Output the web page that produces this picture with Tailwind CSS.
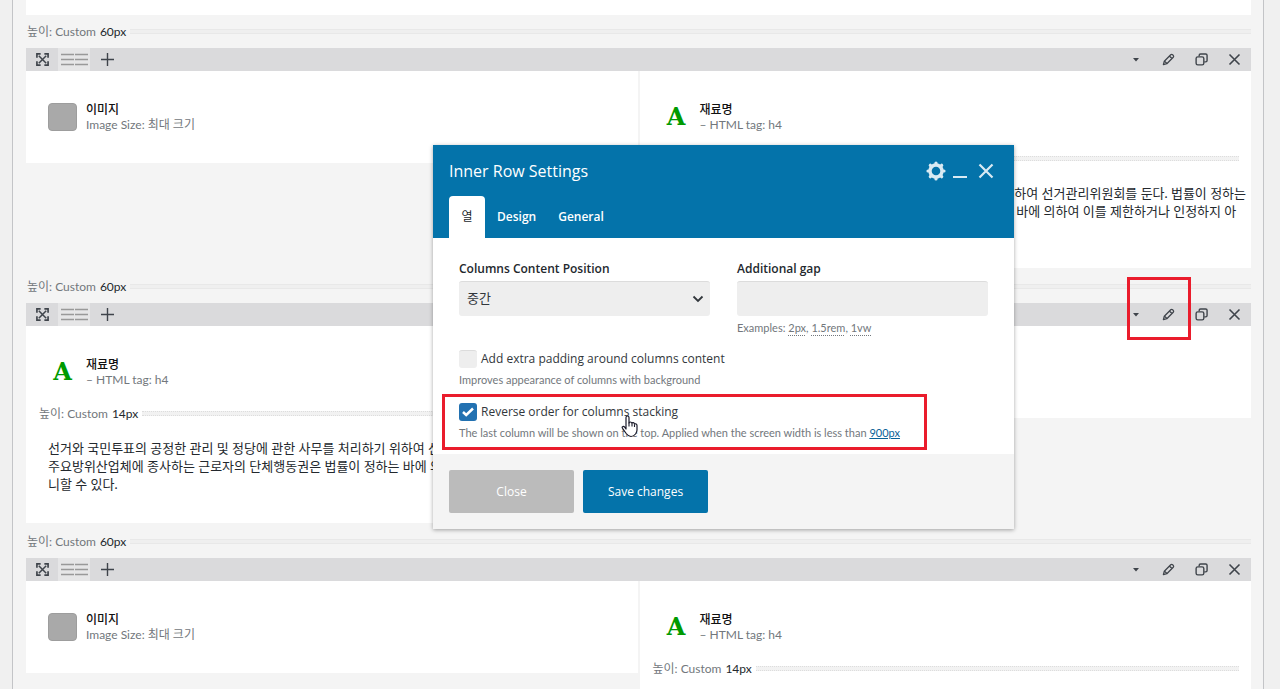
<!DOCTYPE html>
<html lang="ko">
<head>
<meta charset="utf-8">
<title>Inner Row Settings</title>
<script src="https://cdn.jsdelivr.net/npm/@tailwindcss/browser@4"></script>
</head>
<body class="h-screen overflow-hidden bg-[#f0f0f0] pl-3 pr-4 font-['Open_Sans','Noto_Sans_CJK_KR',sans-serif] text-xs text-[#72777c]">

<svg class="hidden" aria-hidden="true">
  <symbol id="i-move" viewBox="0 0 14 14"><path d="M3 3l8 8M11 3l-8 8" fill="none" stroke="currentColor" stroke-width="1.6"/><path d="M1 5V1h4M9 1h4v4M13 9v4H9M5 13H1V9" fill="none" stroke="currentColor" stroke-width="1.8"/></symbol>
  <symbol id="i-cols" viewBox="0 0 28 13"><path d="M1 1.500h13M15 1.500h13M1 6.500h13M15 6.500h13M1 11.500h13M15 11.500h13" fill="none" stroke="#999" stroke-width="1.300"/></symbol>
  <symbol id="i-plus" viewBox="0 0 13 13"><path d="M6.500 0v13M0 6.500h13" fill="none" stroke="currentColor" stroke-width="1.4"/></symbol>
  <symbol id="i-caret" viewBox="0 0 8 4"><path d="M1 0h6L4 3.5z" fill="currentColor"/></symbol>
  <symbol id="i-pencil" viewBox="0 0 14 14"><path d="M1.5 12.5l1-3.7 6.900-6.900q1-.9 2 0l.7.7q.9 1 0 2L5.200 11.500zM8 3.300L10.700 6M3 9l2 2" fill="none" stroke="currentColor" stroke-width="1.400" stroke-linejoin="round"/></symbol>
  <symbol id="i-copy" viewBox="0 0 14 14"><path d="M4.500 3.500V2.500q0-1.500 1.500-1.500h5.500q1.500 0 1.500 1.500V8q0 1.500-1.500 1.500h-1.500" fill="none" stroke="currentColor" stroke-width="1.500"/><rect x="1.200" y="4.200" width="8.300" height="8.600" rx="1.800" fill="none" stroke="currentColor" stroke-width="1.500"/></symbol>
  <symbol id="i-close" viewBox="0 0 13 13"><path d="M1.500 1.500l10 10M11.500 1.500l-10 10" fill="none" stroke="currentColor" stroke-width="1.600"/></symbol>
</svg>

<main class="h-full border-x border-[#c3c4c7] bg-[#f4f4f4] pl-[13px] pr-3 font-['Lato','Noto_Sans_CJK_KR',sans-serif]">
  <div class="h-[15px] bg-white"></div>
  <div class="flex flex-col gap-0.5">

    <section>
      <div class="flex h-[33px] items-center pl-px"><span>높이: Custom</span><b class="ml-1 font-normal text-[#23282d]">60px</b><i class="ml-1 h-[5px] grow border-y border-[#e8e8e8] bg-[#efefef]"></i></div>
      <div class="flex h-[23px] bg-[#dadadc] text-[#3f444b]">
        <button aria-label="Move" class="flex w-8 items-center justify-center"><svg class="size-[13px]"><use href="#i-move"/></svg></button>
        <button aria-label="Columns" class="flex w-8 items-center justify-center bg-[#e6e6e7]"><svg class="h-[13px] w-7"><use href="#i-cols"/></svg></button>
        <button aria-label="Add" class="flex w-[35px] items-center justify-center"><svg class="size-[13px]"><use href="#i-plus"/></svg></button>
        <div class="ml-auto flex">
          <button aria-label="More" class="flex w-[33px] items-center justify-center"><svg class="h-1 w-2"><use href="#i-caret"/></svg></button>
          <button aria-label="Edit" class="flex w-[33px] items-center justify-center"><svg class="size-[13px]"><use href="#i-pencil"/></svg></button>
          <button aria-label="Duplicate" class="flex w-[33px] items-center justify-center"><svg class="size-[13px]"><use href="#i-copy"/></svg></button>
          <button aria-label="Delete" class="flex w-[33px] items-center justify-center"><svg class="size-[13px]"><use href="#i-close"/></svg></button>
        </div>
      </div>
      <div class="grid grid-cols-2 items-start gap-0.5">
        <div class="bg-white py-[31px]">
          <div class="flex items-center pl-[22px]"><span class="h-7 w-[29px] rounded border border-[#9d9d9d] bg-[#a9a9a9]"></span><p class="ml-[9px] leading-[15px]"><b class="font-medium text-[#111]">이미지</b><br>Image Size: 최대 크기</p></div>
        </div>
        <div class="bg-white pt-[31px] pb-[30px]">
          <div class="flex items-center pl-[22px]"><span class="w-[29px] text-center font-['DejaVu_Serif'] text-2xl leading-7 font-bold text-[#009a00]">A</span><p class="ml-[9px] leading-[15px]"><b class="font-medium text-[#111]">재료명</b><br>– HTML tag: h4</p></div>
          <div class="mt-2.5 flex h-[33px] items-center pl-[13px] pr-3"><span>높이: Custom</span><b class="ml-1 font-normal text-[#23282d]">14px</b><i class="ml-1 h-[5px] grow border-y border-dotted border-[#dddddd] bg-[#f2f2f2]"></i></div>
          <p class="mt-[9px] pl-[22px] text-[13px] leading-[18px] whitespace-nowrap text-[#23282d]">선거와 국민투표의 공정한 관리 및 정당에 관한 사무를 처리하기 위하여 선거관리위원회를 둔다. 법률이 정하는<br>주요방위산업체에 종사하는 근로자의 단체행동권은 법률이 정하는 바에 의하여 이를 제한하거나 인정하지 아<br>니할 수 있다.</p>
        </div>
      </div>
    </section>

    <section>
      <div class="flex h-[33px] items-center pl-px"><span>높이: Custom</span><b class="ml-1 font-normal text-[#23282d]">60px</b><i class="ml-1 h-[5px] grow border-y border-[#e8e8e8] bg-[#efefef]"></i></div>
      <div class="flex h-[23px] bg-[#dadadc] text-[#3f444b]">
        <button aria-label="Move" class="flex w-8 items-center justify-center"><svg class="size-[13px]"><use href="#i-move"/></svg></button>
        <button aria-label="Columns" class="flex w-8 items-center justify-center bg-[#e6e6e7]"><svg class="h-[13px] w-7"><use href="#i-cols"/></svg></button>
        <button aria-label="Add" class="flex w-[35px] items-center justify-center"><svg class="size-[13px]"><use href="#i-plus"/></svg></button>
        <div class="ml-auto flex">
          <button aria-label="More" class="flex w-[33px] items-center justify-center"><svg class="h-1 w-2"><use href="#i-caret"/></svg></button>
          <button aria-label="Edit" class="flex w-[33px] items-center justify-center"><svg class="size-[13px]"><use href="#i-pencil"/></svg></button>
          <button aria-label="Duplicate" class="flex w-[33px] items-center justify-center"><svg class="size-[13px]"><use href="#i-copy"/></svg></button>
          <button aria-label="Delete" class="flex w-[33px] items-center justify-center"><svg class="size-[13px]"><use href="#i-close"/></svg></button>
        </div>
      </div>
      <div class="grid grid-cols-2 items-start gap-0.5">
        <div class="bg-white pt-[31px] pb-[30px]">
          <div class="flex items-center pl-[22px]"><span class="w-[29px] text-center font-['DejaVu_Serif'] text-2xl leading-7 font-bold text-[#009a00]">A</span><p class="ml-[9px] leading-[15px]"><b class="font-medium text-[#111]">재료명</b><br>– HTML tag: h4</p></div>
          <div class="mt-2.5 flex h-[33px] items-center pl-[13px] pr-3"><span>높이: Custom</span><b class="ml-1 font-normal text-[#23282d]">14px</b><i class="ml-1 h-[5px] grow border-y border-dotted border-[#dddddd] bg-[#f2f2f2]"></i></div>
          <p class="mt-[9px] pl-[22px] text-[13px] leading-[18px] whitespace-nowrap text-[#23282d]">선거와 국민투표의 공정한 관리 및 정당에 관한 사무를 처리하기 위하여 선거관리위원회를 둔다. 법률이 정하는<br>주요방위산업체에 종사하는 근로자의 단체행동권은 법률이 정하는 바에 의하여 이를 제한하거나 인정하지 아<br>니할 수 있다.</p>
        </div>
        <div class="h-[92px] bg-white"></div>
      </div>
    </section>

    <section>
      <div class="flex h-[33px] items-center pl-px"><span>높이: Custom</span><b class="ml-1 font-normal text-[#23282d]">60px</b><i class="ml-1 h-[5px] grow border-y border-[#e8e8e8] bg-[#efefef]"></i></div>
      <div class="flex h-[23px] bg-[#dadadc] text-[#3f444b]">
        <button aria-label="Move" class="flex w-8 items-center justify-center"><svg class="size-[13px]"><use href="#i-move"/></svg></button>
        <button aria-label="Columns" class="flex w-8 items-center justify-center bg-[#e6e6e7]"><svg class="h-[13px] w-7"><use href="#i-cols"/></svg></button>
        <button aria-label="Add" class="flex w-[35px] items-center justify-center"><svg class="size-[13px]"><use href="#i-plus"/></svg></button>
        <div class="ml-auto flex">
          <button aria-label="More" class="flex w-[33px] items-center justify-center"><svg class="h-1 w-2"><use href="#i-caret"/></svg></button>
          <button aria-label="Edit" class="flex w-[33px] items-center justify-center"><svg class="size-[13px]"><use href="#i-pencil"/></svg></button>
          <button aria-label="Duplicate" class="flex w-[33px] items-center justify-center"><svg class="size-[13px]"><use href="#i-copy"/></svg></button>
          <button aria-label="Delete" class="flex w-[33px] items-center justify-center"><svg class="size-[13px]"><use href="#i-close"/></svg></button>
        </div>
      </div>
      <div class="grid grid-cols-2 items-start gap-0.5">
        <div class="bg-white py-[31px]">
          <div class="flex items-center pl-[22px]"><span class="h-7 w-[29px] rounded border border-[#9d9d9d] bg-[#a9a9a9]"></span><p class="ml-[9px] leading-[15px]"><b class="font-medium text-[#111]">이미지</b><br>Image Size: 최대 크기</p></div>
        </div>
        <div class="bg-white pt-[31px] pb-[30px]">
          <div class="flex items-center pl-[22px]"><span class="w-[29px] text-center font-['DejaVu_Serif'] text-2xl leading-7 font-bold text-[#009a00]">A</span><p class="ml-[9px] leading-[15px]"><b class="font-medium text-[#111]">재료명</b><br>– HTML tag: h4</p></div>
          <div class="mt-2.5 flex h-[33px] items-center pl-[13px] pr-3"><span>높이: Custom</span><b class="ml-1 font-normal text-[#23282d]">14px</b><i class="ml-1 h-[5px] grow border-y border-dotted border-[#dddddd] bg-[#f2f2f2]"></i></div>
        </div>
      </div>
    </section>
  </div>
</main>

<div role="dialog" aria-labelledby="dlg-title" class="absolute top-[145px] left-[433px] w-[581px] bg-white shadow-[0_1px_4px_rgba(0,0,0,0.35)]">
  <header class="flex h-[93px] flex-col justify-between bg-[#0473aa] px-4 text-white">
    <div class="flex h-[51px] items-center">
      <h1 id="dlg-title" class="text-base font-normal">Inner Row Settings</h1>
      <div class="ml-auto flex items-center gap-1.5 text-[#d9eaf3]">
        <button aria-label="Settings"><svg class="size-5" viewBox="0 0 20 20"><circle cx="10" cy="10" r="6" fill="none" stroke="currentColor" stroke-width="3.400"/><path d="M10 2v1M10 17v1M2 10h1M17 10h1M4.300 4.300l.7.7M15 15l.7.7M4.300 15.700l.7-.7M15 5l.7-.7" stroke="currentColor" stroke-width="3.200" stroke-linecap="round"/></svg></button>
        <button aria-label="Minimize"><svg class="h-5 w-4" viewBox="0 0 16 20"><path d="M1 16h14" stroke="currentColor" stroke-width="2"/></svg></button>
        <button aria-label="Close dialog"><svg class="size-6" viewBox="0 0 24 24"><path d="M5.500 5.500l13 13M18.500 5.500l-13 13" stroke="currentColor" stroke-width="2.200"/></svg></button>
      </div>
    </div>
    <nav class="flex h-[42px] text-xs font-semibold">
      <button class="w-9 rounded-t bg-white font-normal text-[#23282d]">열</button>
      <button class="px-3">Design</button>
      <button class="pl-2.5">General</button>
    </nav>
  </header>

  <form>
    <div class="h-[216px] px-[26px] pt-[21px]">
      <div class="grid grid-cols-2 gap-[27px] text-xs">
        <div>
          <label for="pos" class="block leading-5 font-semibold text-[#23282d]">Columns Content Position</label>
          <div class="relative mt-0.5">
            <select id="pos" class="h-[35px] w-full appearance-none rounded-[3px] border-t border-[#dcdcdc] bg-[#eee] px-2 text-[13px] text-[#32373c]"><option>중간</option></select>
            <svg class="absolute top-3.5 right-1.5 h-2 w-3 text-[#32373c]" viewBox="0 0 12 8"><path d="M1.500 1.500L6 6l4.500-4.500" fill="none" stroke="currentColor" stroke-width="1.800"/></svg>
          </div>
        </div>
        <div>
          <label for="gap" class="block leading-5 font-semibold text-[#23282d]">Additional gap</label>
          <input id="gap" type="text" class="mt-0.5 block h-[35px] w-full rounded-[3px] border-t border-[#dcdcdc] bg-[#eee] px-2">
          <p class="mt-1 font-['Lato',sans-serif] text-[11px] leading-4">Examples: <span class="underline decoration-dotted underline-offset-3">2px</span>, <span class="underline decoration-dotted underline-offset-3">1.5rem</span>, <span class="underline decoration-dotted underline-offset-3">1vw</span></p>
        </div>
      </div>
      <div class="mt-3.5 flex items-center text-xs leading-[18px] text-[#32373c]">
        <input id="pad" type="checkbox" class="size-[18px] appearance-none rounded-[3px] border-t border-[#dcdcdc] bg-[#eee]"><label for="pad" class="pl-1">Add extra padding around columns content</label>
      </div>
      <p class="mt-1 font-['Lato',sans-serif] text-[11px] leading-4">Improves appearance of columns with background</p>
      <div class="relative mt-[15px] flex items-center text-xs leading-[18px] text-[#32373c]">
        <input id="rev" type="checkbox" checked class="size-[18px] appearance-none rounded-[3px] bg-[#e9e9e9] checked:bg-[#2271b1]"><svg class="pointer-events-none absolute left-[3px] size-3" viewBox="0 0 12 12"><path d="M1 6l3.200 3L11 2.500" fill="none" stroke="#fff" stroke-width="2.500"/></svg><label for="rev" class="pl-1">Reverse order for columns stacking</label>
      </div>
      <p class="mt-1 font-['Lato',sans-serif] text-[11px] leading-4">The last column will be shown on the top. Applied when the screen width is less than <a href="#" class="text-[#0a6197] underline">900px</a></p>
    </div>
    <footer class="flex h-[75px] items-center gap-[9px] bg-[#f4f4f4] px-4 text-xs text-white">
      <button type="button" class="h-[43px] w-[125px] rounded-xs bg-[#bbb]">Close</button>
      <button type="button" class="h-[43px] w-[125px] rounded-xs bg-[#0473aa]">Save changes</button>
    </footer>
  </form>
</div>

<div class="pointer-events-none absolute top-[394px] left-[442px] h-14 w-[485px] border-3 border-[#ea1c2c]"></div>
<div class="pointer-events-none absolute top-[277px] left-[1127px] h-[63px] w-16 border-3 border-[#ea1c2c]"></div>
<svg class="pointer-events-none absolute top-[415px] left-[621px] h-[23px] w-[18px]" viewBox="0 0 18 23"><path d="M5 14V2.500q0-1.500 1.500-1.500T8 2.500V8q0-1 1.300-1T11 8.300q.2-.8 1.300-.6 1.200.2 1.200 1.500.3-.6 1.300-.4 1.200.3 1.200 1.700v4.500q0 2-1.500 4-2 2.500-4.500 2.500T5.200 18.500L1.500 13.300q-.8-1.300.3-1.800 1-.5 1.900.7z" fill="#fff" stroke="#1a1a2a" stroke-width="1.200" stroke-linejoin="round"/><path d="M8 7.500v4M11 8.500v3M13.500 9.500v2.500" stroke="#1a1a2a" stroke-width="1.100"/></svg>
</body>
</html>
